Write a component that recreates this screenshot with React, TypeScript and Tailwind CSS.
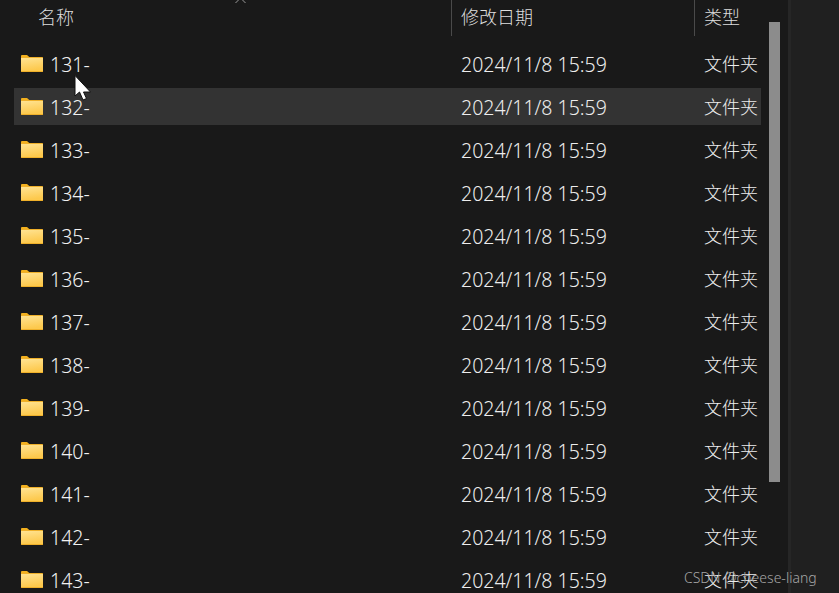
const rows = ["131-","132-","133-","134-","135-","136-","137-","138-","139-","140-","141-","142-","143-"];

function FolderIcon({ id }: { id: string }) {
  return (
    <svg width="24" height="19" viewBox="0 0 24 19" className="shrink-0">
      <defs>
        <linearGradient id={id} x1="0" y1="0" x2="0.25" y2="1">
          <stop offset="0" stopColor="#ffe392" />
          <stop offset="1" stopColor="#fdc94d" />
        </linearGradient>
      </defs>
      <path d="M1 2.2 C1 1.5 1.5 1 2.2 1 H7 L9.6 3.2 V5 H1 Z" fill="#f2b01e" />
      <rect x="1" y="3" width="22" height="15" rx="0.5" fill="#efb02a" />
      <rect x="1" y="4" width="22" height="13" fill={`url(#${id})`} />
    </svg>
  );
}

function Row({ name, active }: { name: string; active?: boolean }) {
  return (
    <div className={"flex h-[37px] w-[747px] shrink-0 items-center " + (active ? "bg-[#333333]" : "")}>
      <div className="ml-[6px] flex w-[441px] items-center gap-[6px]">
        <FolderIcon id={"folder-" + name.slice(0, 3)} />
        <span className="mt-[2px] text-[19.5px] font-light text-[#f2f2f2]">{name}</span>
      </div>
      <span className="mt-[2px] w-[243px] shrink-0 text-[19.5px] font-light text-[#ededed]">2024/11/8 15:59</span>
      <span className="mt-[2px] whitespace-nowrap font-light text-[#ededed]">文件夹</span>
    </div>
  );
}

export default function App() {
  return (
    <div
      className="relative flex h-[593px] w-[839px] overflow-hidden bg-[#191919] text-[18px] text-[#e6e6e6]"
      style={{ fontFamily: '"Noto Sans", "Noto Sans CJK SC", sans-serif' }}
    >
      <div className="w-[788px] shrink-0">
        <div className="flex h-[36px] items-start text-[#dedede]">
          <div className="w-[451px] pl-[38px] pt-[4px] font-light">名称</div>
          <div className="h-[36px] w-[243px] border-l border-[#4a4a4a] pl-[9px] pt-[4px] font-light">修改日期</div>
          <div className="h-[36px] border-l border-[#4a4a4a] pl-[9px] pt-[4px] font-light">类型</div>
        </div>
        <div className="flex flex-col gap-[6px] pl-[14px] pt-[9px]">
          {rows.map((r, i) => (
            <Row key={r} name={r} active={i === 1} />
          ))}
        </div>
      </div>
      <div className="h-full w-[3px] bg-[#262626]" />
      <div className="h-full flex-1 bg-[#202020]" />

      {/* scrollbar thumb */}
      <div className="absolute left-[769px] top-[22px] h-[460px] w-[11px] bg-[#8c8c8c]" />

      {/* sort arrow */}
      <svg width="12" height="6" viewBox="0 0 12 6" className="absolute left-[235px] top-0">
        <path d="M0.5 -2 L5.5 3 L10.5 -2" fill="none" stroke="#9a9a9a" strokeWidth="1" transform="rotate(180 5.5 0.5)" />
      </svg>

      {/* cursor */}
      <svg width="20" height="28" viewBox="0 0 20 28" className="absolute left-[74px] top-[75px]">
        <path d="M1 0.5 V21 L5.5 17 L9 25 L12.5 23.5 L9.5 17 H16.5 Z" fill="#ffffff" stroke="#111111" strokeWidth="1" />
      </svg>

      {/* watermark */}
      <div className="absolute left-[684px] top-[567px] text-[14px] font-light whitespace-nowrap text-[#a6a6a6]">CSDN @cheese-liang</div>
    </div>
  );
}
